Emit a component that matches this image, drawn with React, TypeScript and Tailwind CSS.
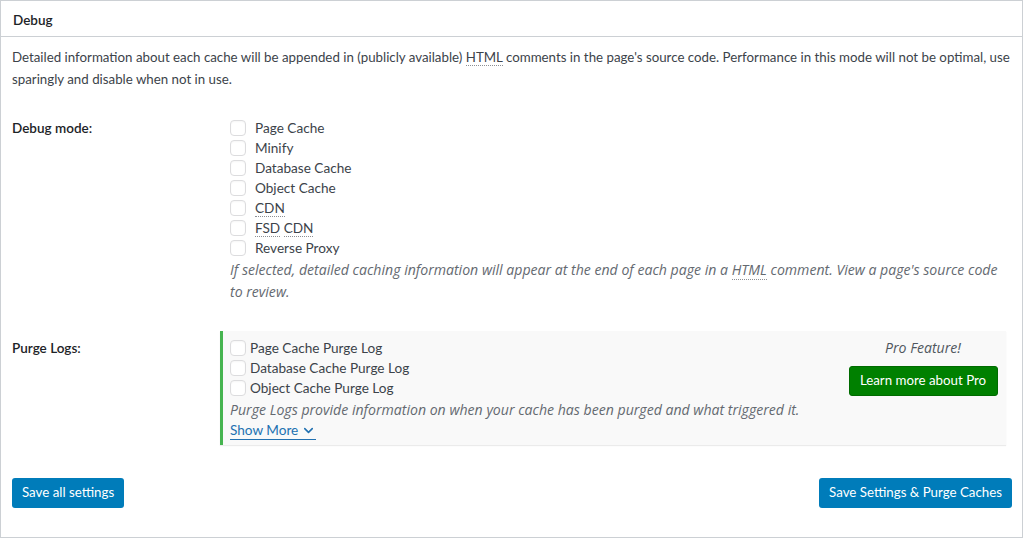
import { ChevronDown } from 'lucide-react'

function Box() {
  return (
    <span className="w-4 h-4 shrink-0 rounded-[4px] border border-[#dcdcde] bg-white shadow-[inset_0_1px_2px_rgba(0,0,0,0.04)]" />
  )
}

function Abbr({ children }: { children: React.ReactNode }) {
  return <abbr className="no-underline border-b border-dotted border-[#8c8f94]">{children}</abbr>
}

function Check({ label, gap = 'gap-[9px]' }: { label: React.ReactNode; gap?: string }) {
  return (
    <label className={`flex items-center ${gap} h-5 text-[13.6px]`}>
      <Box />
      <span className="leading-[18px]">{label}</span>
    </label>
  )
}

const italic = { fontFamily: '"Open Sans", Lato, sans-serif' }

export default function App() {
  const debugItems: React.ReactNode[] = [
    'Page Cache',
    'Minify',
    'Database Cache',
    'Object Cache',
    <Abbr>CDN</Abbr>,
    <><Abbr>FSD</Abbr> <Abbr>CDN</Abbr></>,
    'Reverse Proxy',
  ]
  const purgeItems = ['Page Cache Purge Log', 'Database Cache Purge Log', 'Object Cache Purge Log']

  return (
    <div
      className="w-[1024px] h-[539px] bg-white text-[13px] text-[#3c434a]"
      style={{ fontFamily: 'Lato, "Open Sans", sans-serif' }}
    >
      <div className="w-[1023px] h-[538px] border border-[#ccd0d4] flex flex-col">
        {/* header */}
        <div className="h-[36px] border-b border-[#ccd0d4] px-[12px] pt-[3px] flex items-center">
          <h2 className="text-[13.5px] font-semibold text-[#1d2327]">Debug</h2>
        </div>

        <div className="px-[11px] pt-[9px] flex flex-col">
          <p className="leading-[22px] text-[13.3px]">
            Detailed information about each cache will be appended in (publicly available) <Abbr>HTML</Abbr> comments in the page's source code. Performance in this mode will not be optimal, use sparingly and disable when not in use.
          </p>

          {/* Debug mode */}
          <div className="flex mt-[28px]">
            <div className="w-[218px] shrink-0 font-semibold text-[#1d2327] leading-5 text-[13.5px]">Debug mode:</div>
            <div className="flex-1">
              {debugItems.map((it, i) => (
                <Check key={i} label={it} />
              ))}
              <p className="italic text-[#646970] leading-[22px] mt-px text-[14.1px]" style={italic}>
                If selected, detailed caching information will appear at the end of each page in a <Abbr>HTML</Abbr> comment. View a page's source code to review.
              </p>
            </div>
          </div>

          {/* Purge Logs */}
          <div className="flex mt-[28px]">
            <div className="w-[208px] shrink-0 font-semibold text-[#1d2327] leading-5 pt-[7px] text-[13.5px]">Purge Logs:</div>
            <div className="w-[786px] bg-[#f9f9f9] border-l-[3px] border-[#46b450] shadow-[0_1px_1px_rgba(0,0,0,0.08)] flex pl-[7px] pr-[8px] pt-[7px] pb-[4px]">
              <div className="flex-1">
                {purgeItems.map((it) => (
                  <Check key={it} label={it} gap="gap-[4px]" />
                ))}
                <p className="italic text-[#646970] leading-[22px] mt-[1px] text-[14.1px]" style={italic}>
                  Purge Logs provide information on when your cache has been purged and what triggered it.
                </p>
                <a className="inline-flex items-center gap-[3px] text-[#2271b1] text-[13.6px] leading-[18px] border-b border-[#2271b1]">
                  Show More <ChevronDown size={15} strokeWidth={2.5} />
                </a>
              </div>
              <div className="w-[150px] flex flex-col items-center">
                <p className="italic text-[#50575e] leading-5 text-[14.1px]" style={italic}>Pro Feature!</p>
                <button className="mt-[8px] h-[30px] w-[149px] rounded-[3px] bg-[#008000] border border-[#006b00] text-white text-[13.3px]">
                  Learn more about Pro
                </button>
              </div>
            </div>
          </div>

          {/* footer buttons */}
          <div className="flex justify-between mt-[33px]">
            <button className="h-[30px] px-[10px] rounded-[3px] bg-[#007cba] text-white text-[13.3px]">Save all settings</button>
            <button className="h-[30px] px-[10px] rounded-[3px] bg-[#007cba] text-white text-[13.3px] mr-[-1px]">Save Settings &amp; Purge Caches</button>
          </div>
        </div>
      </div>
    </div>
  )
}
